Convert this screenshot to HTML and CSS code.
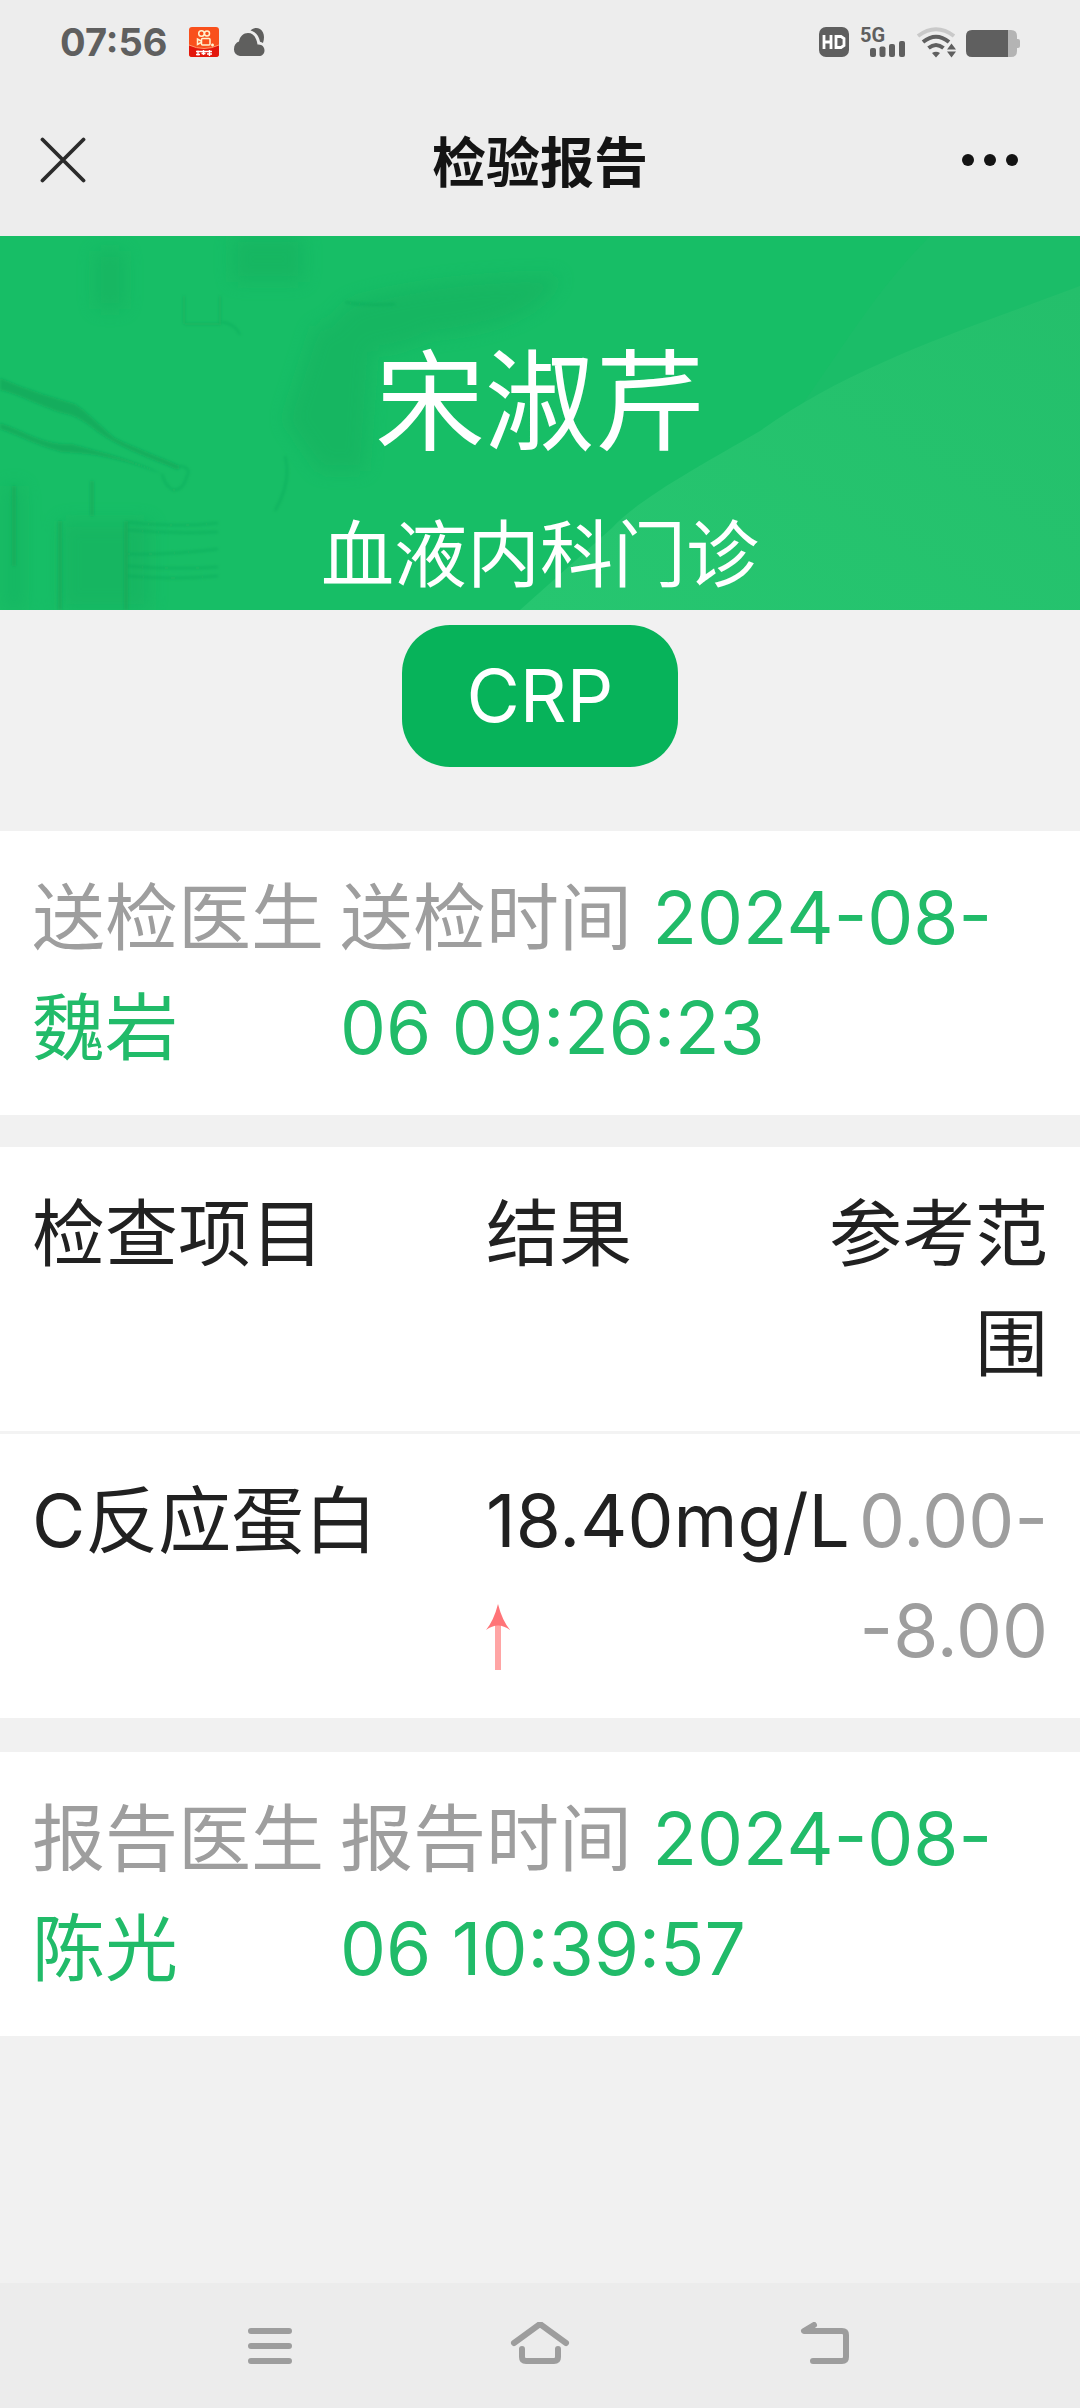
FILE: index.html
```html
<!DOCTYPE html>
<html lang="zh-CN">
<head>
<meta charset="utf-8">
<meta name="viewport" content="width=device-width, initial-scale=1">
<title>检验报告</title>
<link rel="stylesheet" href="styles.css">
</head>
<body>
<div class="status">
  <span class="clock">07:56</span>
  <svg class="app-icon" width="30" height="30" viewBox="0 0 30 30" aria-hidden="true">
    <rect width="30" height="30" rx="3" fill="#f9501c"/>
    <path d="M0 18Q15 25 30 18V27Q30 30 27 30H3Q0 30 0 27Z" fill="#e3170c"/>
    <path d="M0 18Q15 25 30 18" fill="none" stroke="#ff9a6b" stroke-width="1"/>
    <g fill="none" stroke="#fff3d0" stroke-width="1.5"><circle cx="12.500" cy="6.500" r="2.800"/><circle cx="18" cy="6.500" r="2.500"/><rect x="12.500" y="11.500" width="8.500" height="6.500" rx="1"/><path d="M12 14L8.500 12V17.500L12 15.500M22 18h3M23.500 16.500v3"/></g>
    <path d="M7 24.500h16M7 27.500h4M12.500 26.500h4M18 27h5M9 23.500v5M14.500 23v5M20.500 23v6" stroke="#fff" stroke-width="1.400" fill="none"/>
  </svg>
  <svg width="32" height="30" viewBox="0 0 32 30" aria-hidden="true">
    <path fill="#5f5f5e" d="M7 29a6.500 6.500 0 0 1-6-7c0-4 2-6.500 5-7.500C7 9 10.500 6 15 6c5 0 8.500 4 9.500 11.500C29 17 31.500 20 31.500 23.500 31.500 27 29 29 26 29ZM17.500 3.500C20 .8 24 .3 27 2c4 2.500 5 8 3 14-1-.8-2-1.200-3-1.300C26 9 23 5 17.500 3.500Z"/>
  </svg>
  <span class="spacer"></span>
  <svg width="202" height="40" viewBox="818 22 202 40" aria-hidden="true">
    <rect x="819" y="27" width="30" height="30" rx="7" fill="#5f5f5f"/>
    <path d="M824 35v14M831 35v14M824 42h7" stroke="#fff" stroke-width="2.800" fill="none"/>
    <path d="M836 36.500h5l3 2v7l-3 2h-5z" stroke="#fff" stroke-width="2.800" fill="none"/>
    <text x="860" y="42" class="net">5G</text>
    <g fill="#5f5f5f"><rect x="870" y="48" width="6" height="9" rx="2"/><rect x="879.500" y="46.500" width="6" height="10.500" rx="2"/><rect x="889" y="44" width="6" height="13" rx="2"/><rect x="899" y="41" width="6" height="16" rx="2"/></g>
    <g fill="none" stroke="#5f5f5f" stroke-width="4"><path stroke="#c9c9c9" d="M918 36Q936 22.500 954 36"/><path d="M923 42Q936 31.500 949 42"/><path d="M928.500 48Q936 42 943.500 48"/></g>
    <path fill="#5f5f5f" d="M932 53q4-2.500 8 0l-4 4.500zM947 49.500l4.500-6 4.500 6zM947 51.500l4.500 6 4.500-6z"/>
    <path fill="#b4b4b4" d="M1003 30h8q6 0 6 6v3h1q2 0 2 2v5q0 2-2 2h-1v3q0 6-6 6h-8z"/>
    <path fill="#5f5f5f" d="M1008 30h-36q-6 0-6 6v15q0 6 6 6h36z"/>
  </svg>
</div>
<header class="titlebar">
  <button class="icon-btn" type="button" aria-label="关闭">
    <svg width="46" height="46" viewBox="0 0 46 46"><path d="M2.500 2.500l41 41M43.500 2.500l-41 41" stroke="#2b2b2b" stroke-width="3.800" stroke-linecap="round"/></svg>
  </button>
  <h1 class="title">检验报告</h1>
  <button class="icon-btn icon-btn-end" type="button" aria-label="更多">
    <svg width="58" height="14" viewBox="0 0 58 14" fill="#141414"><circle cx="6" cy="7" r="6"/><circle cx="28" cy="7" r="6"/><circle cx="50" cy="7" r="6"/></svg>
  </button>
</header>
<main>
  <section class="banner">
    <svg class="banner-art" viewBox="0 0 1080 374" preserveAspectRatio="none" aria-hidden="true">
      <defs>
        <linearGradient id="sweep" x1="0" y1="1" x2="1" y2="0"><stop offset="0" stop-color="#26c670"/><stop offset="1" stop-color="#24bf6b"/></linearGradient>
        <filter id="soft" x="-30%" y="-30%" width="160%" height="160%"><feGaussianBlur stdDeviation="9"/></filter>
        <filter id="fine"><feGaussianBlur stdDeviation="1.500"/></filter>
      </defs>
      <rect width="1080" height="374" fill="#17be66"/>
      <path d="M930 0C880 50 850 100 815 150C780 200 770 215 740 235L520 374H1080V0Z" fill="#1bbd68"/>
      <path d="M1080 50C960 95 850 130 760 195C700 230 640 262 612 292L520 374H1080Z" fill="url(#sweep)"/>
      <g filter="url(#soft)" fill="#14ab5c" opacity=".4">
        <path d="M95 15h30v58H95zM232 0h72v46h-72z"/>
        <path d="M350 66Q440 40 560 40Q540 90 430 100Q370 130 310 105Z"/>
        <path d="M315 90h60l-10 145h-45l-35-50z"/>
        <path d="M5 250h18v124H5zM60 285h90v89H60z"/>
      </g>
      <g filter="url(#fine)">
        <path fill="#13a557" opacity=".65" d="M0 142C30 155 55 162 75 168C90 178 100 190 115 202C135 212 158 220 180 230L178 234C150 222 120 212 98 196C85 186 78 180 62 177C40 170 18 158 0 154ZM0 187C25 195 45 210 72 208C92 214 130 222 162 238C130 226 105 218 62 216C40 211 20 200 0 193Z"/>
        <g fill="none" stroke="#10a354" stroke-width="2" opacity=".45">
          <path d="M180 230Q192 232 187 240Q183 255 173 254Q165 250 162 238M345 66Q365 70 395 68M222 86Q236 88 240 99M185 88H220V60M184 60V88M285 220Q292 245 275 275"/>
          <path d="M128 286q45 6 90 1M128 294q45 4 90 2M128 318q45 1 90-5M128 330q45 4 90 1M128 340q45 4 90 0"/>
          <path stroke-width="4" d="M126 285v89M60 285v89M92 245v35M14 250v80"/>
        </g>
      </g>
    </svg>
    <h2 class="patient">宋淑芹</h2>
    <p class="dept">血液内科门诊</p>
  </section>
  <div class="tabs"><button class="tab" type="button">CRP</button></div>
  <section class="card meta">
    <p class="who"><span class="label">送检医生</span><span class="value">魏岩</span></p>
    <p class="when"><span class="label">送检时间</span> <span class="value">2024-08-06 09:26:23</span></p>
  </section>
  <table class="card results">
    <colgroup><col class="c-item"><col><col class="c-range"></colgroup>
    <thead><tr><th>检查项目</th><th>结果</th><th class="end">参考范围</th></tr></thead>
    <tbody><tr>
      <td>C反应蛋白</td>
      <td class="result">18.40mg/L<svg class="arrow" width="24" height="66" viewBox="0 0 24 66" role="img" aria-label="偏高"><path d="M12 18V66" stroke="#ffa5a5" stroke-width="6"/><path d="M12 0Q16 16 24 26Q12 17 0 26Q8 16 12 0Z" fill="#ff7478"/></svg></td>
      <td class="end range">0.00-<wbr>-8.00</td>
    </tr></tbody>
  </table>
  <section class="card meta">
    <p class="who"><span class="label">报告医生</span><span class="value">陈光</span></p>
    <p class="when"><span class="label">报告时间</span> <span class="value">2024-08-06 10:39:57</span></p>
  </section>
</main>
<nav class="navbar">
  <button class="nav-btn" type="button" aria-label="最近任务"><svg width="96" height="48" viewBox="0 0 96 48"><path d="M29 9h38M29 24h38M29 39h38"/></svg></button>
  <button class="nav-btn" type="button" aria-label="主页"><svg width="96" height="48" viewBox="0 0 96 48"><path d="M22 21L48 2L74 21M30 27V35Q30 39 34 39H62Q66 39 66 35V27"/></svg></button>
  <button class="nav-btn" type="button" aria-label="返回"><svg width="96" height="48" viewBox="0 0 96 48"><path d="M52 3L42 9H80Q84 9 84 13V35Q84 39 80 39H51"/></svg></button>
</nav>
</body>
</html>
```
FILE: styles.css
```css
* { box-sizing: border-box; }

body {
  margin: 0;
  min-height: 100vh;
  display: flex;
  flex-direction: column;
  background: #f1f1f1;
  color: #212121;
  font-family: Inter, "Noto Sans CJK SC", sans-serif;
  font-size: 73px;
  line-height: 110px;
}

h1, h2, p { margin: 0; font-weight: 400; }

button {
  margin: 0;
  padding: 0;
  border: 0;
  background: none;
  font: inherit;
}

svg { display: block; }

.status {
  display: flex;
  align-items: center;
  gap: 14px;
  height: 84px;
  padding: 0 60px;
  background: #ededed;
}

.clock {
  margin-right: 8px;
  font-size: 38px;
  line-height: 48px;
  font-weight: 700;
  color: #5f5f5f;
}

.spacer { flex: 1; }

.net { font: 700 20px Roboto, sans-serif; fill: #5f5f5f; }

.titlebar {
  display: grid;
  grid-template-columns: 1fr auto 1fr;
  align-items: center;
  height: 152px;
  padding: 0 40px;
  background: #ededed;
}

.title {
  padding-top: 8px;
  font-size: 54px;
  line-height: 80px;
  font-weight: 700;
  color: #141414;
}

.icon-btn { justify-self: start; }
.icon-btn-end { justify-self: end; padding-right: 20px; }

main { flex: 1; }

.banner {
  position: relative;
  padding-top: 84px;
  color: #fff;
  text-align: center;
}

.banner-art {
  position: absolute;
  inset: 0;
  width: 100%;
  height: 100%;
}

.patient {
  position: relative;
  margin-bottom: 15px;
  font-size: 110px;
  line-height: 165px;
}

.dept { position: relative; }

.tabs {
  display: flex;
  justify-content: center;
  padding: 15px 0 64px;
}

.tab {
  padding: 16px 65px;
  border-radius: 48px;
  background: #07b35a;
  color: #fff;
}

.card {
  width: 100%;
  background: #fff;
}

.meta {
  display: flex;
  gap: 16px;
  padding: 32px;
}

.who {
  display: flex;
  flex: 0 0 auto;
  flex-direction: column;
}

.when { flex: 1; }
.label { color: #9e9e9e; }
.value { color: #21bb69; }

.results {
  margin: 32px 0 34px;
  table-layout: fixed;
  border-collapse: collapse;
}

.c-item { width: 45%; }
.c-range { width: 24%; }

th, td {
  padding: 32px 0;
  font-weight: 400;
  text-align: left;
  vertical-align: top;
}

th { border-bottom: 3px solid #f3f3f3; }

th:first-child, td:first-child { padding-left: 32px; }

th.end, td.end { padding-right: 32px; text-align: right; }

.result { white-space: nowrap; }
.range { color: #9e9e9e; }

.arrow { margin-top: 28px; }

.navbar {
  display: flex;
  justify-content: center;
  height: 125px;
  background: #ececec;
}

.nav-btn {
  display: flex;
  flex: 0 0 25%;
  align-items: center;
  justify-content: center;
}

.nav-btn path {
  fill: none;
  stroke: #9d9d9d;
  stroke-width: 6;
  stroke-linecap: round;
  stroke-linejoin: round;
}
```
